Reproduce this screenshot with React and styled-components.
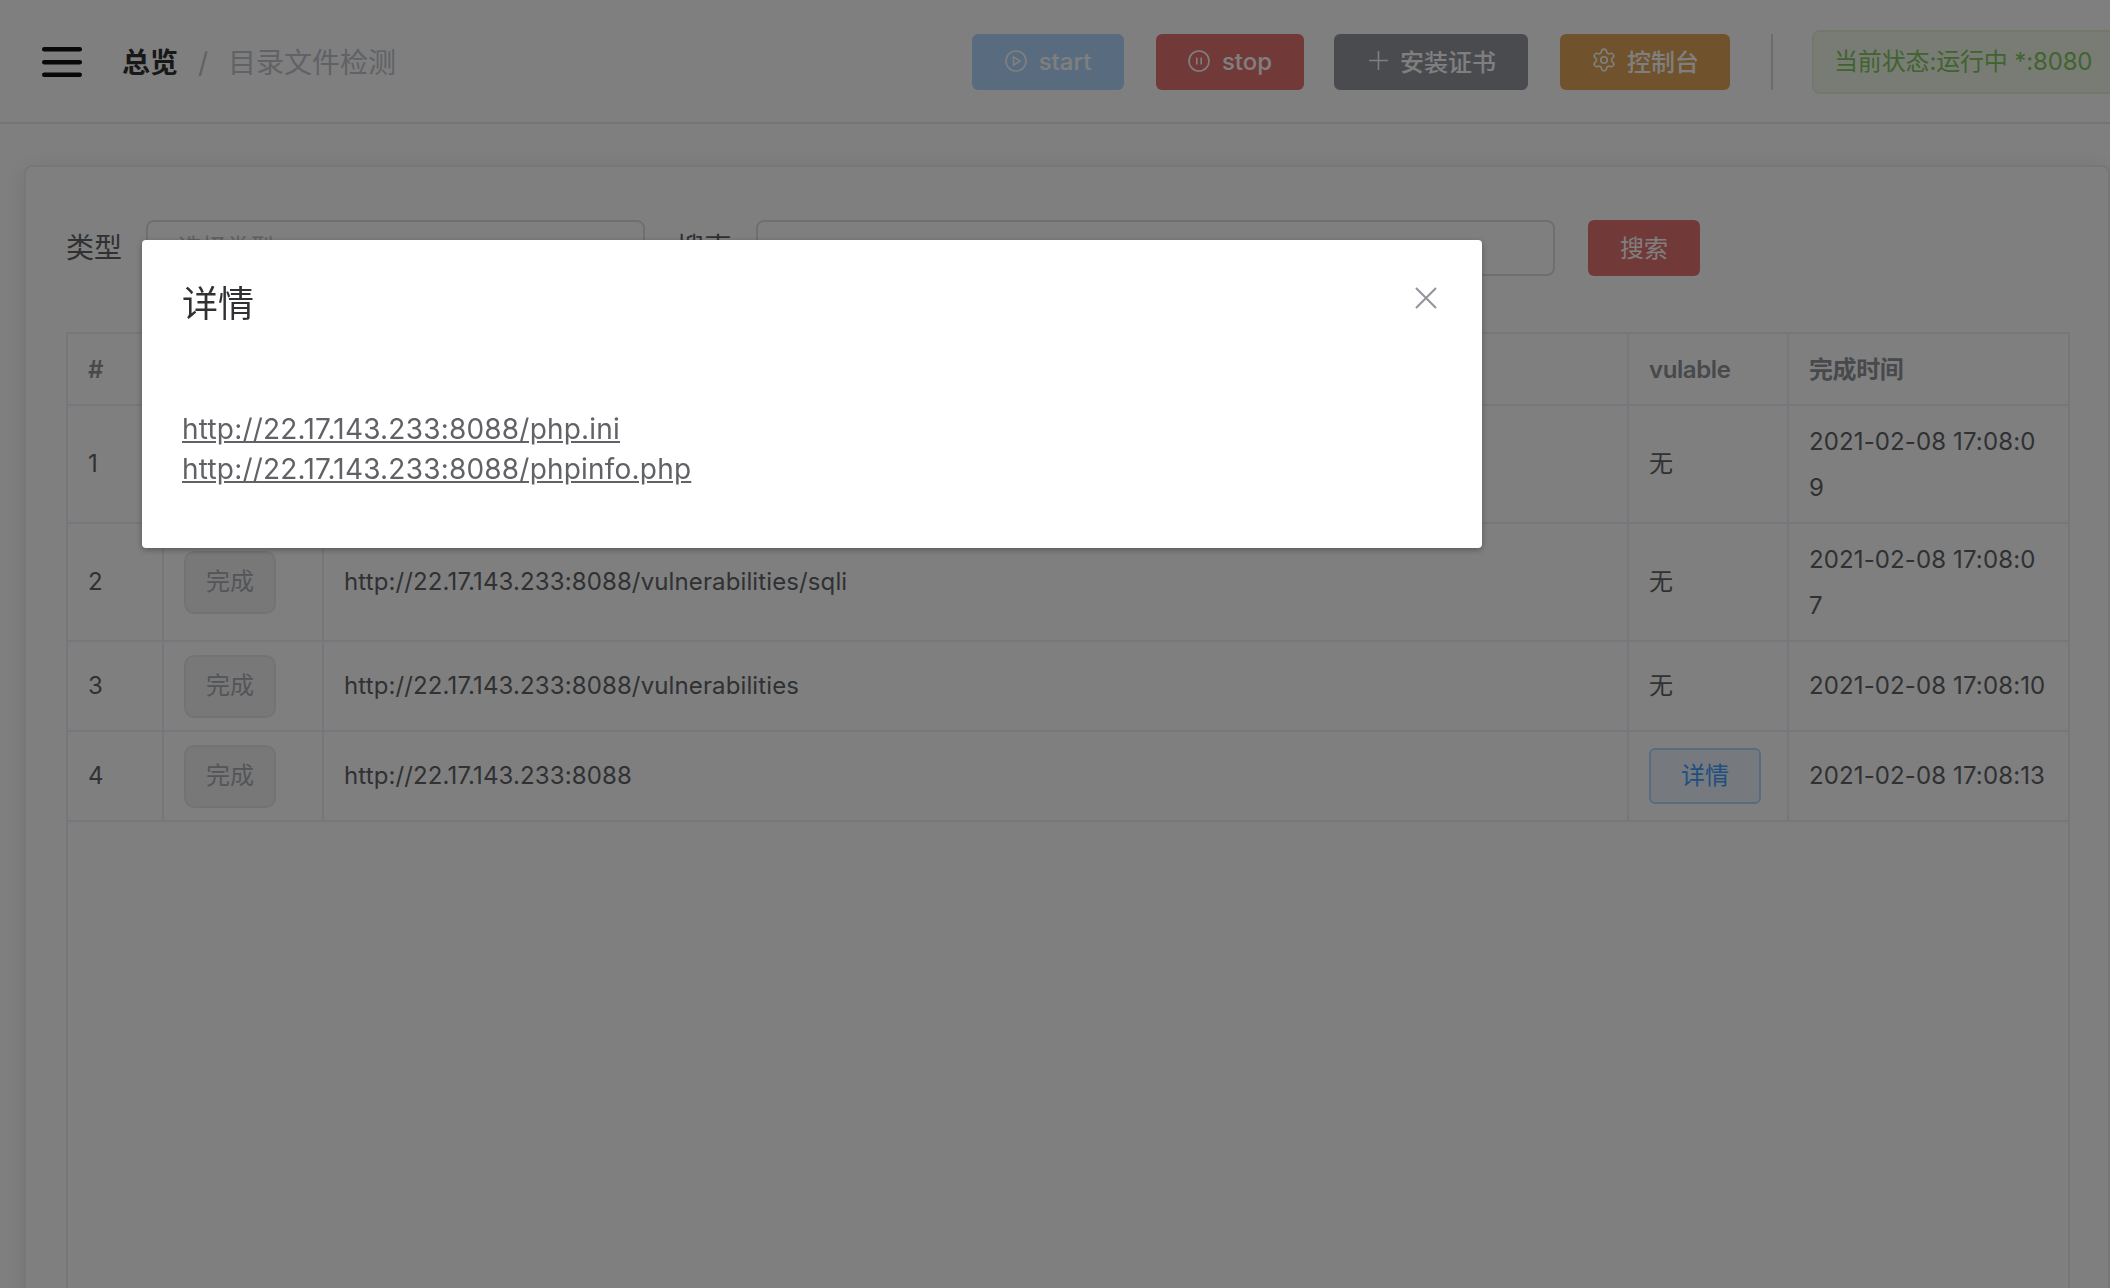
import React from "react";
import styled, { createGlobalStyle } from "styled-components";
import { Settings } from "lucide-react";

const FONT = `Inter, "Noto Sans CJK SC", "Noto Sans", sans-serif`;

const Global = createGlobalStyle`
  html, body { margin: 0; padding: 0; background: #fff; }
  * { box-sizing: border-box; }
  body { font-family: ${FONT}; color: #606266; }
`;

const Page = styled.div`
  width: 100%;
  height: 100vh;
  overflow: hidden;
  display: flex;
  flex-direction: column;
  background: #fff;
`;

const Header = styled.header`
  flex: none;
  height: 124px;
  padding: 2px 0 0 42px;
  display: flex;
  align-items: center;
  border-bottom: 2px solid #e8e8ec;
`;

const Burger = styled.svg`
  flex: none;
  width: 40px;
  height: 30px;
  margin-right: 40px;
  display: block;
`;

const Crumbs = styled.nav`
  display: flex;
  align-items: center;
  margin-top: 2px;
  font-size: 28px;
  line-height: 40px;
`;

const CrumbStrong = styled.span`
  color: #303133;
  font-weight: 700;
`;

const CrumbSep = styled.span`
  color: #c0c4cc;
  margin: 0 20px;
`;

const CrumbCurrent = styled.span`
  color: #c0c4cc;
`;

const Actions = styled.div`
  margin-left: auto;
  margin-right: -6px;
  display: flex;
  align-items: center;
`;

const ActionButton = styled.button`
  flex: none;
  width: ${(p) => p.$w}px;
  margin-right: ${(p) => p.$mr}px;
  height: 56px;
  padding: 0 0 ${(p) => p.$pb}px;
  border: 0;
  border-radius: 6px;
  background: ${(p) => p.$bg};
  color: #fff;
  font-family: ${FONT};
  font-size: 24px;
  font-weight: 500;
  display: flex;
  align-items: center;
  justify-content: center;
  gap: ${(p) => p.$gap}px;
`;

const Icon = styled.svg`
  flex: none;
  width: 22px;
  height: 22px;
  fill: none;
  stroke: currentColor;
  stroke-width: 1.6;
`;

const Divider = styled.div`
  flex: none;
  width: 2px;
  height: 56px;
  margin: 0 39px 0 41px;
  background: #d6d8dc;
`;

const Status = styled.div`
  flex: none;
  width: 304px;
  height: 64px;
  padding-left: 20px;
  border: 2px solid #e1f3d8;
  border-radius: 8px;
  background: #f0f9eb;
  color: #82c85e;
  font-size: 24px;
  line-height: 60px;
  letter-spacing: -0.15px;
  white-space: nowrap;
`;

const Main = styled.main`
  flex: 1;
  min-height: 0;
  padding: 41px 0 0 24px;
  display: flex;
`;

const Card = styled.section`
  flex: 1;
  min-width: 0;
  margin-bottom: -20px;
  padding: 53px 38px 0 40px;
  border: 2px solid #ebeef5;
  border-radius: 8px;
  box-shadow: 0 4px 24px rgba(0, 0, 0, 0.1);
  display: flex;
  flex-direction: column;
`;

const Filters = styled.form`
  flex: none;
  height: 56px;
  margin: 0 0 56px;
  display: flex;
  align-items: center;
`;

const FieldLabel = styled.label`
  flex: none;
  width: 56px;
  margin-right: 24px;
  font-size: 28px;
  line-height: 56px;
  color: #606266;
`;

const Field = styled.div`
  flex: none;
  width: ${(p) => p.$w}px;
  height: 56px;
  margin-right: ${(p) => p.$mr}px;
  padding-left: 30px;
  border: 2px solid #dcdfe6;
  border-radius: 8px;
  font-size: 24px;
  line-height: 52px;
  color: #c0c4cc;
`;

const SearchButton = styled.button`
  flex: none;
  width: 112px;
  height: 56px;
  padding: 0 0 4px;
  border: 0;
  border-radius: 6px;
  background: #e57373;
  color: #fff;
  font-family: ${FONT};
  font-size: 24px;
`;

const TableFrame = styled.div`
  flex: 1;
  min-height: 0;
  border-left: 2px solid #ebeef5;
  border-right: 2px solid #ebeef5;
`;

const Table = styled.table`
  width: 100%;
  table-layout: fixed;
  border-collapse: collapse;
  font-size: 24px;
  line-height: 46px;
  letter-spacing: 0.12px;
`;

const Row = styled.tr`
  height: ${(p) => p.$h}px;
`;

const HeadCell = styled.th`
  padding: 2px 20px 0;
  border: 2px solid #ebeef5;
  text-align: left;
  font-weight: 600;
  letter-spacing: -0.4px;
  color: #909399;
  white-space: nowrap;
  &:first-child { border-left: 0; }
  &:last-child { border-right: 0; }
`;

const Cell = styled.td`
  padding: ${(p) => (p.$wrapped ? "2px" : "0")} 20px 0;
  border: 2px solid #ebeef5;
  color: #606266;
  white-space: nowrap;
  &:first-child { border-left: 0; }
  &:last-child { border-right: 0; }
`;

const DoneTag = styled.button`
  display: block;
  width: 92px;
  height: 63px;
  padding: 0 0 6px;
  border: 2px solid #e4e7ed;
  border-radius: 10px;
  background: #f0f0f0;
  color: #a8abb0;
  font-family: ${FONT};
  font-size: 24px;
`;

const DetailButton = styled.button`
  display: block;
  width: 112px;
  height: 56px;
  padding: 0 0 6px;
  border: 2px solid #b3d8ff;
  border-radius: 6px;
  background: #ecf5ff;
  color: #409eff;
  font-family: ${FONT};
  font-size: 24px;
`;

const Backdrop = styled.div`
  position: fixed;
  inset: 0;
  background: rgba(0, 0, 0, 0.5);
`;

const Dialog = styled.div`
  position: absolute;
  left: 142px;
  top: 240px;
  width: 1340px;
  height: 308px;
  padding: 40px 40px 0;
  border-radius: 4px;
  background: #fff;
  box-shadow: 0 2px 6px rgba(0, 0, 0, 0.3);
`;

const DialogTitle = styled.h2`
  margin: 0 0 81px;
  font-size: 36px;
  line-height: 48px;
  font-weight: 400;
  color: #303133;
`;

const CloseIcon = styled.svg`
  position: absolute;
  right: 45px;
  top: 47px;
  width: 22px;
  height: 22px;
  stroke: #909399;
  stroke-width: 2;
`;

const DialogLink = styled.a`
  display: block;
  font-size: 28px;
  line-height: 40px;
  letter-spacing: 0.2px;
  color: #606266;
  text-decoration: underline;
`;

const rows = [
  { id: 1, h: 118, time: ["2021-02-08 17:08:0", "9"], hidden: true },
  { id: 2, h: 118, url: "http://22.17.143.233:8088/vulnerabilities/sqli", time: ["2021-02-08 17:08:0", "7"] },
  { id: 3, h: 90, url: "http://22.17.143.233:8088/vulnerabilities", time: ["2021-02-08 17:08:10"] },
  { id: 4, h: 90, url: "http://22.17.143.233:8088", time: ["2021-02-08 17:08:13"], detail: true },
];

export default function App() {
  return (
    <Page>
      <Global />
      <Header>
        <Burger viewBox="0 0 40 30">
          <rect x="0" y="0" width="40" height="4.5" rx="2.2" fill="#111" />
          <rect x="0" y="13" width="40" height="4.5" rx="2.2" fill="#111" />
          <rect x="0" y="25.5" width="40" height="4.5" rx="2.2" fill="#111" />
        </Burger>
        <Crumbs>
          <CrumbStrong>总览</CrumbStrong>
          <CrumbSep>/</CrumbSep>
          <CrumbCurrent>目录文件检测</CrumbCurrent>
        </Crumbs>
        <Actions>
          <ActionButton $w={152} $mr={32} $pb={2} $gap={12} $bg="#b3d8ff">
            <Icon viewBox="0 0 22 22">
              <circle cx="11" cy="11" r="10" />
              <path d="M8.5 6.8 L15 11 L8.5 15.2 Z" />
            </Icon>
            start
          </ActionButton>
          <ActionButton $w={148} $mr={30} $pb={2} $gap={12} $bg="#e57373">
            <Icon viewBox="0 0 22 22">
              <circle cx="11" cy="11" r="10" />
              <path d="M8.8 7.5 V14.5 M13.2 7.5 V14.5" />
            </Icon>
            stop
          </ActionButton>
          <ActionButton $w={194} $mr={32} $pb={4} $gap={12} $bg="#94969f">
            <Icon viewBox="0 0 22 22">
              <path d="M12.5 2 V21 M3 11.5 H22" />
            </Icon>
            安装证书
          </ActionButton>
          <ActionButton $w={170} $mr={0} $pb={4} $gap={10} $bg="#e0a658">
            <Settings size={26} strokeWidth={1.5} />
            控制台
          </ActionButton>
          <Divider />
          <Status>当前状态:运行中 *:8080</Status>
        </Actions>
      </Header>
      <Main>
        <Card>
          <Filters>
            <FieldLabel>类型</FieldLabel>
            <Field $w={499} $mr={31}>选择类型</Field>
            <FieldLabel>搜索</FieldLabel>
            <Field $w={799} $mr={33} />
            <SearchButton type="button">搜索</SearchButton>
          </Filters>
          <TableFrame>
            <Table>
              <colgroup>
                <col style={{ width: 95 }} />
                <col style={{ width: 160 }} />
                <col />
                <col style={{ width: 160 }} />
                <col style={{ width: 280 }} />
              </colgroup>
              <thead>
                <Row $h={72}>
                  <HeadCell>#</HeadCell>
                  <HeadCell />
                  <HeadCell />
                  <HeadCell>vulable</HeadCell>
                  <HeadCell>完成时间</HeadCell>
                </Row>
              </thead>
              <tbody>
                {rows.map((r) => (
                  <Row key={r.id} $h={r.h}>
                    <Cell>{r.id}</Cell>
                    <Cell>{!r.hidden && <DoneTag type="button">完成</DoneTag>}</Cell>
                    <Cell>{r.url}</Cell>
                    <Cell>{r.detail ? <DetailButton type="button">详情</DetailButton> : "无"}</Cell>
                    <Cell $wrapped={r.time.length > 1}>
                      {r.time.map((t, i) => (
                        <React.Fragment key={t}>
                          {i > 0 && <br />}
                          {t}
                        </React.Fragment>
                      ))}
                    </Cell>
                  </Row>
                ))}
              </tbody>
            </Table>
          </TableFrame>
        </Card>
      </Main>
      <Backdrop>
        <Dialog>
          <DialogTitle>详情</DialogTitle>
          <CloseIcon viewBox="0 0 22 22">
            <path d="M1 1 L21 21 M21 1 L1 21" />
          </CloseIcon>
          <DialogLink>http://22.17.143.233:8088/php.ini</DialogLink>
          <DialogLink>http://22.17.143.233:8088/phpinfo.php</DialogLink>
        </Dialog>
      </Backdrop>
    </Page>
  );
}
